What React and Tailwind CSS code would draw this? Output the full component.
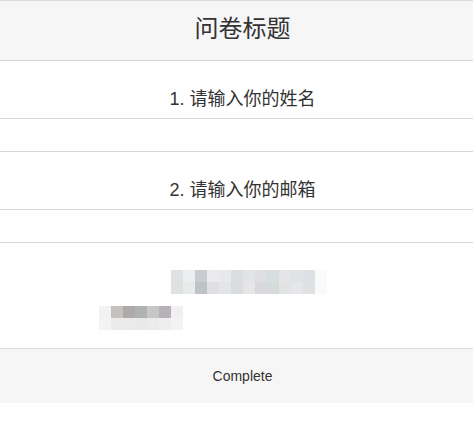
const FONT = { fontFamily: '"Liberation Sans", "Noto Sans CJK SC", sans-serif' }

const QUESTIONS = ['1. 请输入你的姓名', '2. 请输入你的邮箱']

// pixelated (censored) image blocks
const ROW_A = ['#dfe1e3', '#eceeef', '#c8ccd0', '#ebebed', '#e8e9eb', '#dcdde1', '#e1e3e6', '#dfdfe2', '#d8dde0', '#e3e5e6', '#e0e2e5', '#dde0e4']
const ROW_B = ['#dfe2e3', '#e9ebeb', '#bcc4c7', '#e0e0e2', '#e3e6e8', '#d9dde0', '#e6e6e6', '#d8d8de', '#d4dbd9', '#e2e4e3', '#e4e6ea', '#e0e1e3']
const ROW_C = ['#f2f2f2', '#c5c1bf', '#adabaa', '#b0b3b3', '#c6c8c6', '#b7b2b8', '#f0f0f0']
const ROW_D = ['#f3f3f3', '#ebebeb', '#eaeaea', '#e9e9e9', '#ebebeb', '#eeeeee', '#f3f3f3']

function Blocks({ colors }) {
  return (
    <div className="flex">
      {colors.map((c, i) => (
        <div key={i} className="w-[12px] h-[12px]" style={{ background: c }} />
      ))}
    </div>
  )
}

function Question({ label }) {
  return (
    <>
      <div className="h-[57px] pt-[25px] pl-[12px] text-center text-[18px] leading-[27px] text-[#333]">{label}</div>
      <div className="h-[34px] border-y border-[#d2d6db]" />
    </>
  )
}

export default function App() {
  return (
    <div className="w-[473px] bg-white" style={FONT}>
      <div className="h-[61px] pl-[12px] border-y border-[#d9d9d9] bg-[#f6f6f6] flex items-center justify-center">
        <h1 className="text-[24px] leading-[30px] text-[#333] -mt-[3px]">问卷标题</h1>
      </div>

      {QUESTIONS.map(q => <Question key={q} label={q} />)}

      <div className="h-[105px] pt-[27px]">
        <div className="ml-[171px] flex">
          <div>
            <Blocks colors={ROW_A} />
            <Blocks colors={ROW_B} />
          </div>
          <div className="w-[12px] h-[24px] bg-[#fafafa]" />
        </div>
        <div className="ml-[99px] mt-[12px]">
          <Blocks colors={ROW_C} />
          <Blocks colors={ROW_D} />
        </div>
      </div>

      <div className="h-[55px] pl-[12px] border-t border-[#d9d9d9] bg-[#f6f6f6] flex items-center justify-center">
        <span className="text-[14px] text-[#333]">Complete</span>
      </div>
    </div>
  )
}
